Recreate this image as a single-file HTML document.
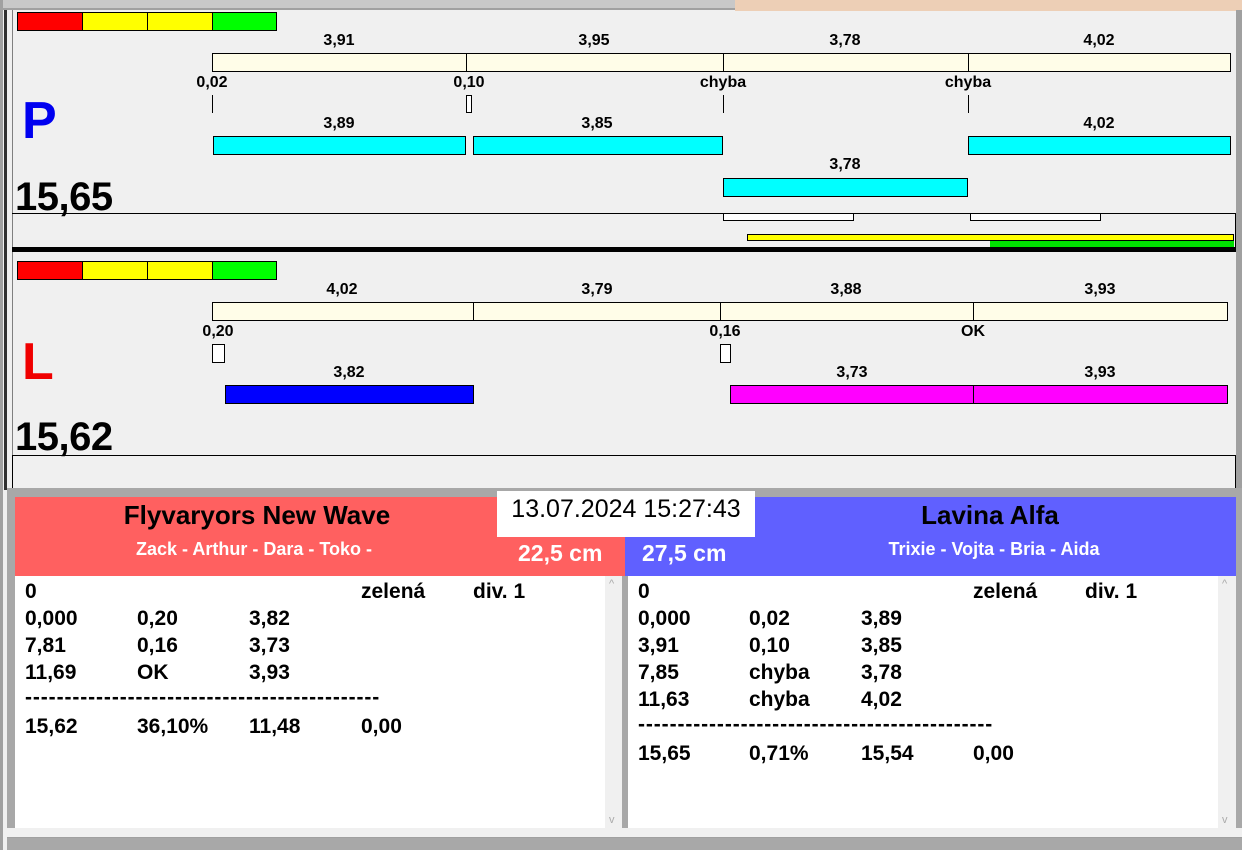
<!DOCTYPE html>
<html><head><meta charset="utf-8"><style>
*{margin:0;padding:0;box-sizing:border-box}
body{width:1242px;height:850px;background:#f0f0f0;position:relative;overflow:hidden;font-family:"Liberation Sans",Arial,sans-serif;font-weight:bold;color:#000}
div{position:absolute}
.c{transform:translateX(-50%);font-size:16px;line-height:18px;white-space:nowrap}
.b{border:1px solid #000}
.cream{background:#fffde8}
.cy{background:#00ffff}
.v{width:1px;background:#000}
.big{font-size:40px;line-height:40px;letter-spacing:-0.5px}
.row{font-size:21px;line-height:27px;white-space:nowrap}
.row span{position:absolute}
</style></head><body>
<!-- top strip -->
<div style="left:0;top:0;width:735px;height:10px;background:#c8c8c8;border-bottom:2px solid #a0a0a0"></div>
<div style="left:735px;top:0;width:507px;height:11px;background:#edcfb6"></div>
<div style="left:0;top:0;width:3px;height:850px;background:#a0a0a0"></div>
<div style="left:4px;top:10px;width:3px;height:480px;background:#303030"></div>
<div style="left:1236px;top:10px;width:6px;height:840px;background:#a0a0a0"></div>

<!-- P panel -->
<div style="left:12px;top:10px;width:1px;height:480px;background:#808080"></div>
<div style="left:17px;top:12px;width:66px;height:19px;background:#f00;border:1px solid #000"></div>
<div style="left:82px;top:12px;width:66px;height:19px;background:#ff0;border:1px solid #000"></div>
<div style="left:147px;top:12px;width:66px;height:19px;background:#ff0;border:1px solid #000"></div>
<div style="left:212px;top:12px;width:65px;height:19px;background:#0f0;border:1px solid #000"></div>

<div class="c" style="left:339px;top:32px">3,91</div>
<div class="c" style="left:594px;top:32px">3,95</div>
<div class="c" style="left:845px;top:32px">3,78</div>
<div class="c" style="left:1099px;top:32px">4,02</div>
<div class="b cream" style="left:212px;top:53px;width:1019px;height:19px"></div>
<div class="v" style="left:466px;top:53px;height:19px"></div>
<div class="v" style="left:723px;top:53px;height:19px"></div>
<div class="v" style="left:968px;top:53px;height:19px"></div>
<div class="c" style="left:212px;top:74px">0,02</div>
<div class="c" style="left:469px;top:74px">0,10</div>
<div class="c" style="left:723px;top:74px">chyba</div>
<div class="c" style="left:968px;top:74px">chyba</div>
<div class="v" style="left:212px;top:95px;height:18px"></div>
<div class="b" style="left:466px;top:95px;width:6px;height:18px;background:#fff"></div>
<div class="v" style="left:723px;top:95px;height:18px"></div>
<div class="v" style="left:968px;top:95px;height:18px"></div>
<div style="left:22px;top:93px;font-size:52px;line-height:56px;color:#0000f0">P</div>
<div class="c" style="left:339px;top:115px">3,89</div>
<div class="c" style="left:597px;top:115px">3,85</div>
<div class="c" style="left:1099px;top:115px">4,02</div>
<div class="b cy" style="left:213px;top:136px;width:253px;height:19px"></div>
<div class="b cy" style="left:473px;top:136px;width:250px;height:19px"></div>
<div class="b cy" style="left:968px;top:136px;width:263px;height:19px"></div>
<div class="c" style="left:845px;top:156px">3,78</div>
<div class="b cy" style="left:723px;top:178px;width:245px;height:19px"></div>
<div class="big" style="left:15px;top:177px">15,65</div>
<div style="left:12px;top:213px;width:1224px;height:1px;background:#000"></div>
<div style="left:1235px;top:213px;width:1px;height:34px;background:#000"></div>
<div class="b" style="left:723px;top:213px;width:131px;height:8px;background:#fff"></div>
<div class="b" style="left:970px;top:213px;width:131px;height:8px;background:#fff"></div>
<div class="b" style="left:747px;top:234px;width:487px;height:7px;background:#ff0"></div>
<div style="left:990px;top:241px;width:244px;height:6px;background:#00e000"></div>
<div style="left:12px;top:247px;width:1224px;height:5px;background:#000"></div>

<!-- L panel -->
<div style="left:17px;top:261px;width:66px;height:19px;background:#f00;border:1px solid #000"></div>
<div style="left:82px;top:261px;width:66px;height:19px;background:#ff0;border:1px solid #000"></div>
<div style="left:147px;top:261px;width:66px;height:19px;background:#ff0;border:1px solid #000"></div>
<div style="left:212px;top:261px;width:65px;height:19px;background:#0f0;border:1px solid #000"></div>
<div class="c" style="left:342px;top:281px">4,02</div>
<div class="c" style="left:597px;top:281px">3,79</div>
<div class="c" style="left:846px;top:281px">3,88</div>
<div class="c" style="left:1100px;top:281px">3,93</div>
<div class="b cream" style="left:212px;top:302px;width:1016px;height:19px"></div>
<div class="v" style="left:473px;top:302px;height:19px"></div>
<div class="v" style="left:720px;top:302px;height:19px"></div>
<div class="v" style="left:973px;top:302px;height:19px"></div>
<div class="c" style="left:218px;top:323px">0,20</div>
<div class="c" style="left:725px;top:323px">0,16</div>
<div class="c" style="left:973px;top:323px">OK</div>
<div class="b" style="left:212px;top:344px;width:13px;height:19px;background:#fff"></div>
<div class="b" style="left:720px;top:344px;width:11px;height:19px;background:#fff"></div>
<div style="left:22px;top:334px;font-size:52px;line-height:56px;color:#f00000">L</div>
<div class="c" style="left:349px;top:364px">3,82</div>
<div class="c" style="left:852px;top:364px">3,73</div>
<div class="c" style="left:1100px;top:364px">3,93</div>
<div class="b" style="left:225px;top:385px;width:249px;height:19px;background:#0000ff"></div>
<div class="b" style="left:730px;top:385px;width:498px;height:19px;background:#ff00ff"></div>
<div class="v" style="left:973px;top:385px;height:19px"></div>
<div class="big" style="left:15px;top:417px">15,62</div>
<div style="left:12px;top:455px;width:1224px;height:33px;border:1px solid #000;border-bottom:none"></div>

<!-- bottom area -->
<div style="left:7px;top:488px;width:1235px;height:362px;background:#a8a8a8"></div>
<div style="left:15px;top:497px;width:610px;height:79px;background:#ff6060"></div>
<div style="left:625px;top:497px;width:611px;height:79px;background:#6060ff"></div>
<div style="left:497px;top:491px;width:258px;height:46px;background:#fff"></div>
<div style="left:497px;top:494px;width:258px;text-align:center;font-weight:normal;font-size:25px;line-height:30px">13.07.2024 15:27:43</div>
<div class="c" style="left:257px;top:500px;font-size:26px;line-height:30px">Flyvaryors New Wave</div>
<div class="c" style="left:254px;top:538px;font-size:18px;line-height:22px;color:#fff">Zack - Arthur - Dara - Toko -</div>
<div style="left:518px;top:539px;font-size:23px;line-height:28px;color:#fff">22,5 cm</div>
<div class="c" style="left:990px;top:500px;font-size:26px;line-height:30px">Lavina Alfa</div>
<div class="c" style="left:994px;top:538px;font-size:18px;line-height:22px;color:#fff">Trixie - Vojta - Bria - Aida</div>
<div style="left:642px;top:539px;font-size:23px;line-height:28px;color:#fff">27,5 cm</div>

<div style="left:15px;top:576px;width:590px;height:252px;background:#fff"></div>
<div style="left:605px;top:576px;width:17px;height:252px;background:#f0f0f0;color:#aaa;font-size:11px;text-align:center;font-weight:normal"><span style="position:absolute;top:2px;left:4px">^</span><span style="position:absolute;bottom:2px;left:4px">v</span></div>
<div style="left:628px;top:576px;width:590px;height:252px;background:#fff"></div>
<div style="left:1218px;top:576px;width:18px;height:252px;background:#f0f0f0;color:#aaa;font-size:11px;font-weight:normal"><span style="position:absolute;top:2px;left:4px">^</span><span style="position:absolute;bottom:2px;left:4px">v</span></div>
<div style="left:7px;top:828px;width:1235px;height:10px;background:#f0f0f0;border-bottom:1px solid #a0a0a0"></div>

<div style="left:25px;top:578px;width:580px">
<div class="row" style="position:relative;height:27px"><span style="left:0">0</span><span style="left:336px">zelená</span><span style="left:448px">div. 1</span></div>
<div class="row" style="position:relative;height:27px"><span style="left:0">0,000</span><span style="left:112px">0,20</span><span style="left:224px">3,82</span></div>
<div class="row" style="position:relative;height:27px"><span style="left:0">7,81</span><span style="left:112px">0,16</span><span style="left:224px">3,73</span></div>
<div class="row" style="position:relative;height:27px"><span style="left:0">11,69</span><span style="left:112px">OK</span><span style="left:224px">3,93</span></div>
<div class="row" style="position:relative;height:27px"><span style="left:0;top:-2px;letter-spacing:0.9px">---------------------------------------------</span></div>
<div class="row" style="position:relative;height:27px"><span style="left:0">15,62</span><span style="left:112px">36,10%</span><span style="left:224px">11,48</span><span style="left:336px">0,00</span></div>
</div>
<div style="left:638px;top:578px;width:580px">
<div class="row" style="position:relative;height:27px"><span style="left:0">0</span><span style="left:335px">zelená</span><span style="left:447px">div. 1</span></div>
<div class="row" style="position:relative;height:27px"><span style="left:0">0,000</span><span style="left:111px">0,02</span><span style="left:223px">3,89</span></div>
<div class="row" style="position:relative;height:27px"><span style="left:0">3,91</span><span style="left:111px">0,10</span><span style="left:223px">3,85</span></div>
<div class="row" style="position:relative;height:27px"><span style="left:0">7,85</span><span style="left:111px">chyba</span><span style="left:223px">3,78</span></div>
<div class="row" style="position:relative;height:27px"><span style="left:0">11,63</span><span style="left:111px">chyba</span><span style="left:223px">4,02</span></div>
<div class="row" style="position:relative;height:27px"><span style="left:0;top:-2px;letter-spacing:0.9px">---------------------------------------------</span></div>
<div class="row" style="position:relative;height:27px"><span style="left:0">15,65</span><span style="left:111px">0,71%</span><span style="left:223px">15,54</span><span style="left:335px">0,00</span></div>
</div>
</body></html>
